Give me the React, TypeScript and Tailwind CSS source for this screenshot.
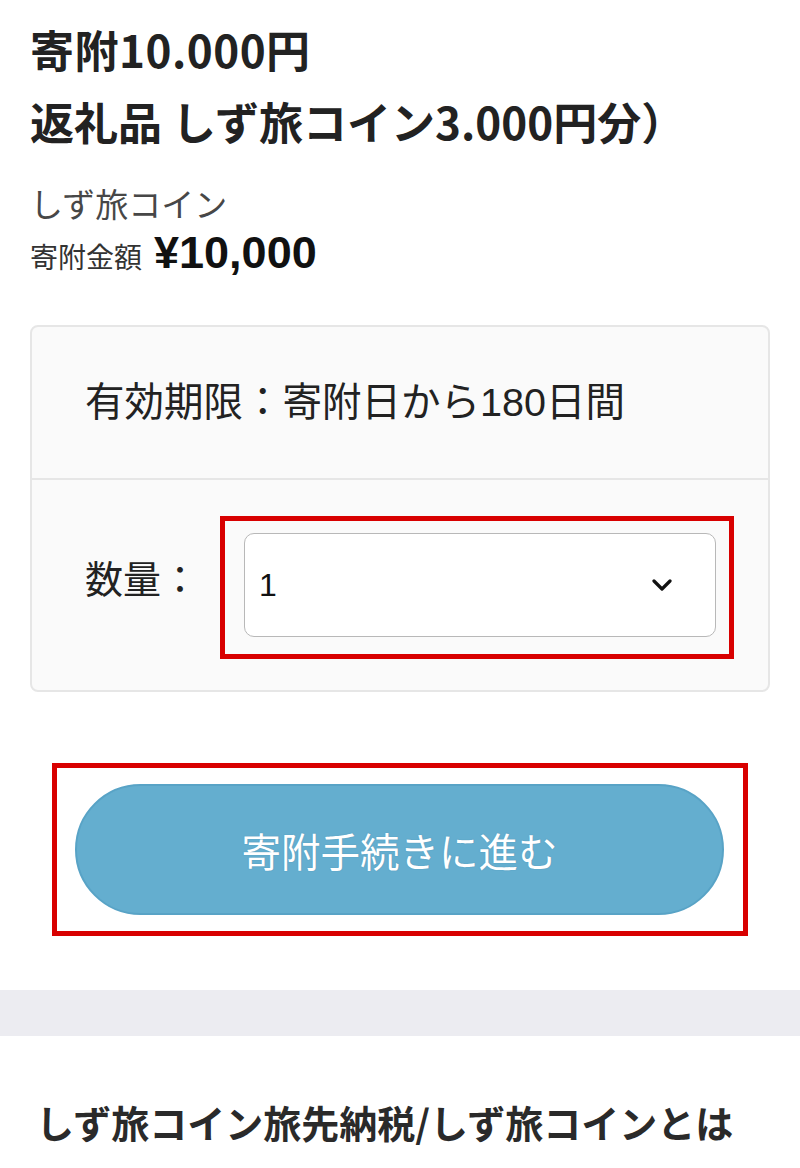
import React from "react";

const cjk = "font-['Noto_Sans_CJK_JP','Noto_Sans',sans-serif]";
const latin = "font-['Liberation_Sans','Noto_Sans_CJK_JP',sans-serif]";

export default function App() {
  return (
    <div className="min-h-[1168px] w-full bg-white">
      <div className="px-[30px] pt-[13px]">
        <div className={`${cjk} text-[44px] font-bold leading-[72px] text-[#222]`}>
          <div className="tracking-[0.5px]">寄附10.000円</div>
          <div>返礼品 しず旅コイン3.000円分）</div>
        </div>
        <div className={`${cjk} mt-[22px] text-[33px] leading-[48px] text-[#474747]`}>しず旅コイン</div>
        <div className="flex items-baseline gap-[12px] leading-[52px]">
          <span className={`${cjk} text-[28px] text-[#333]`}>寄附金額</span>
          <span className={`${latin} text-[45px] font-bold text-[#111]`}>¥10,000</span>
        </div>

        <div className="mt-[43px] rounded-[8px] border-2 border-[#e6e6e6] bg-[#fafafa]">
          <div className="flex h-[153px] items-center border-b-2 border-[#e6e6e6] pl-[53px]">
            <span className={`${latin} text-[39.5px] text-[#222]`}>
              有効期限：寄附日から180日間
            </span>
          </div>
          <div className="flex items-center pb-[31px] pl-[53px] pr-[34px] pt-[36px]">
            <div className={`${cjk} w-[135px] flex-none pb-[22px] text-[38px] text-[#222]`}>数量：</div>
            <div className="flex-1 border-[5px] border-[#d80000] pb-[17px] pl-[19px] pr-[13px] pt-[12px]">
              <div className="flex h-[104px] items-center justify-between rounded-[10px] border-[1.5px] border-[#b8b8b8] bg-white pl-[14px] pr-[43px]">
                <span className={`${latin} text-[32px] text-[#111]`}>1</span>
                <svg width="20" height="12" viewBox="0 0 20 12" fill="none">
                  <path d="M2 2 L10 10 L18 2" stroke="#111" strokeWidth="3.2" strokeLinecap="round" strokeLinejoin="round" />
                </svg>
              </div>
            </div>
          </div>
        </div>
      </div>

      <div className="mt-[71px] px-[52px]">
        <div className="border-[5px] border-[#d80000] pb-[16px] pl-[18px] pr-[19px] pt-[16px]">
          <div className="flex h-[131px] items-center justify-center rounded-full border-2 border-[#58a3c6] bg-[#64aecf]">
            <span className={`${cjk} text-[39.5px] font-normal text-white [text-shadow:0_0_1px_rgba(40,100,140,0.5)]`}>寄附手続きに進む</span>
          </div>
        </div>
      </div>

      <div className="mt-[54px] h-[46px] w-full bg-[#ececf1]" />

      <div className={`${cjk} mt-[57px] px-[36px] text-[38px] font-bold leading-[57px] text-[#2a2a2a]`}>
        しず旅コイン旅先納税/しず旅コインとは
      </div>
    </div>
  );
}
